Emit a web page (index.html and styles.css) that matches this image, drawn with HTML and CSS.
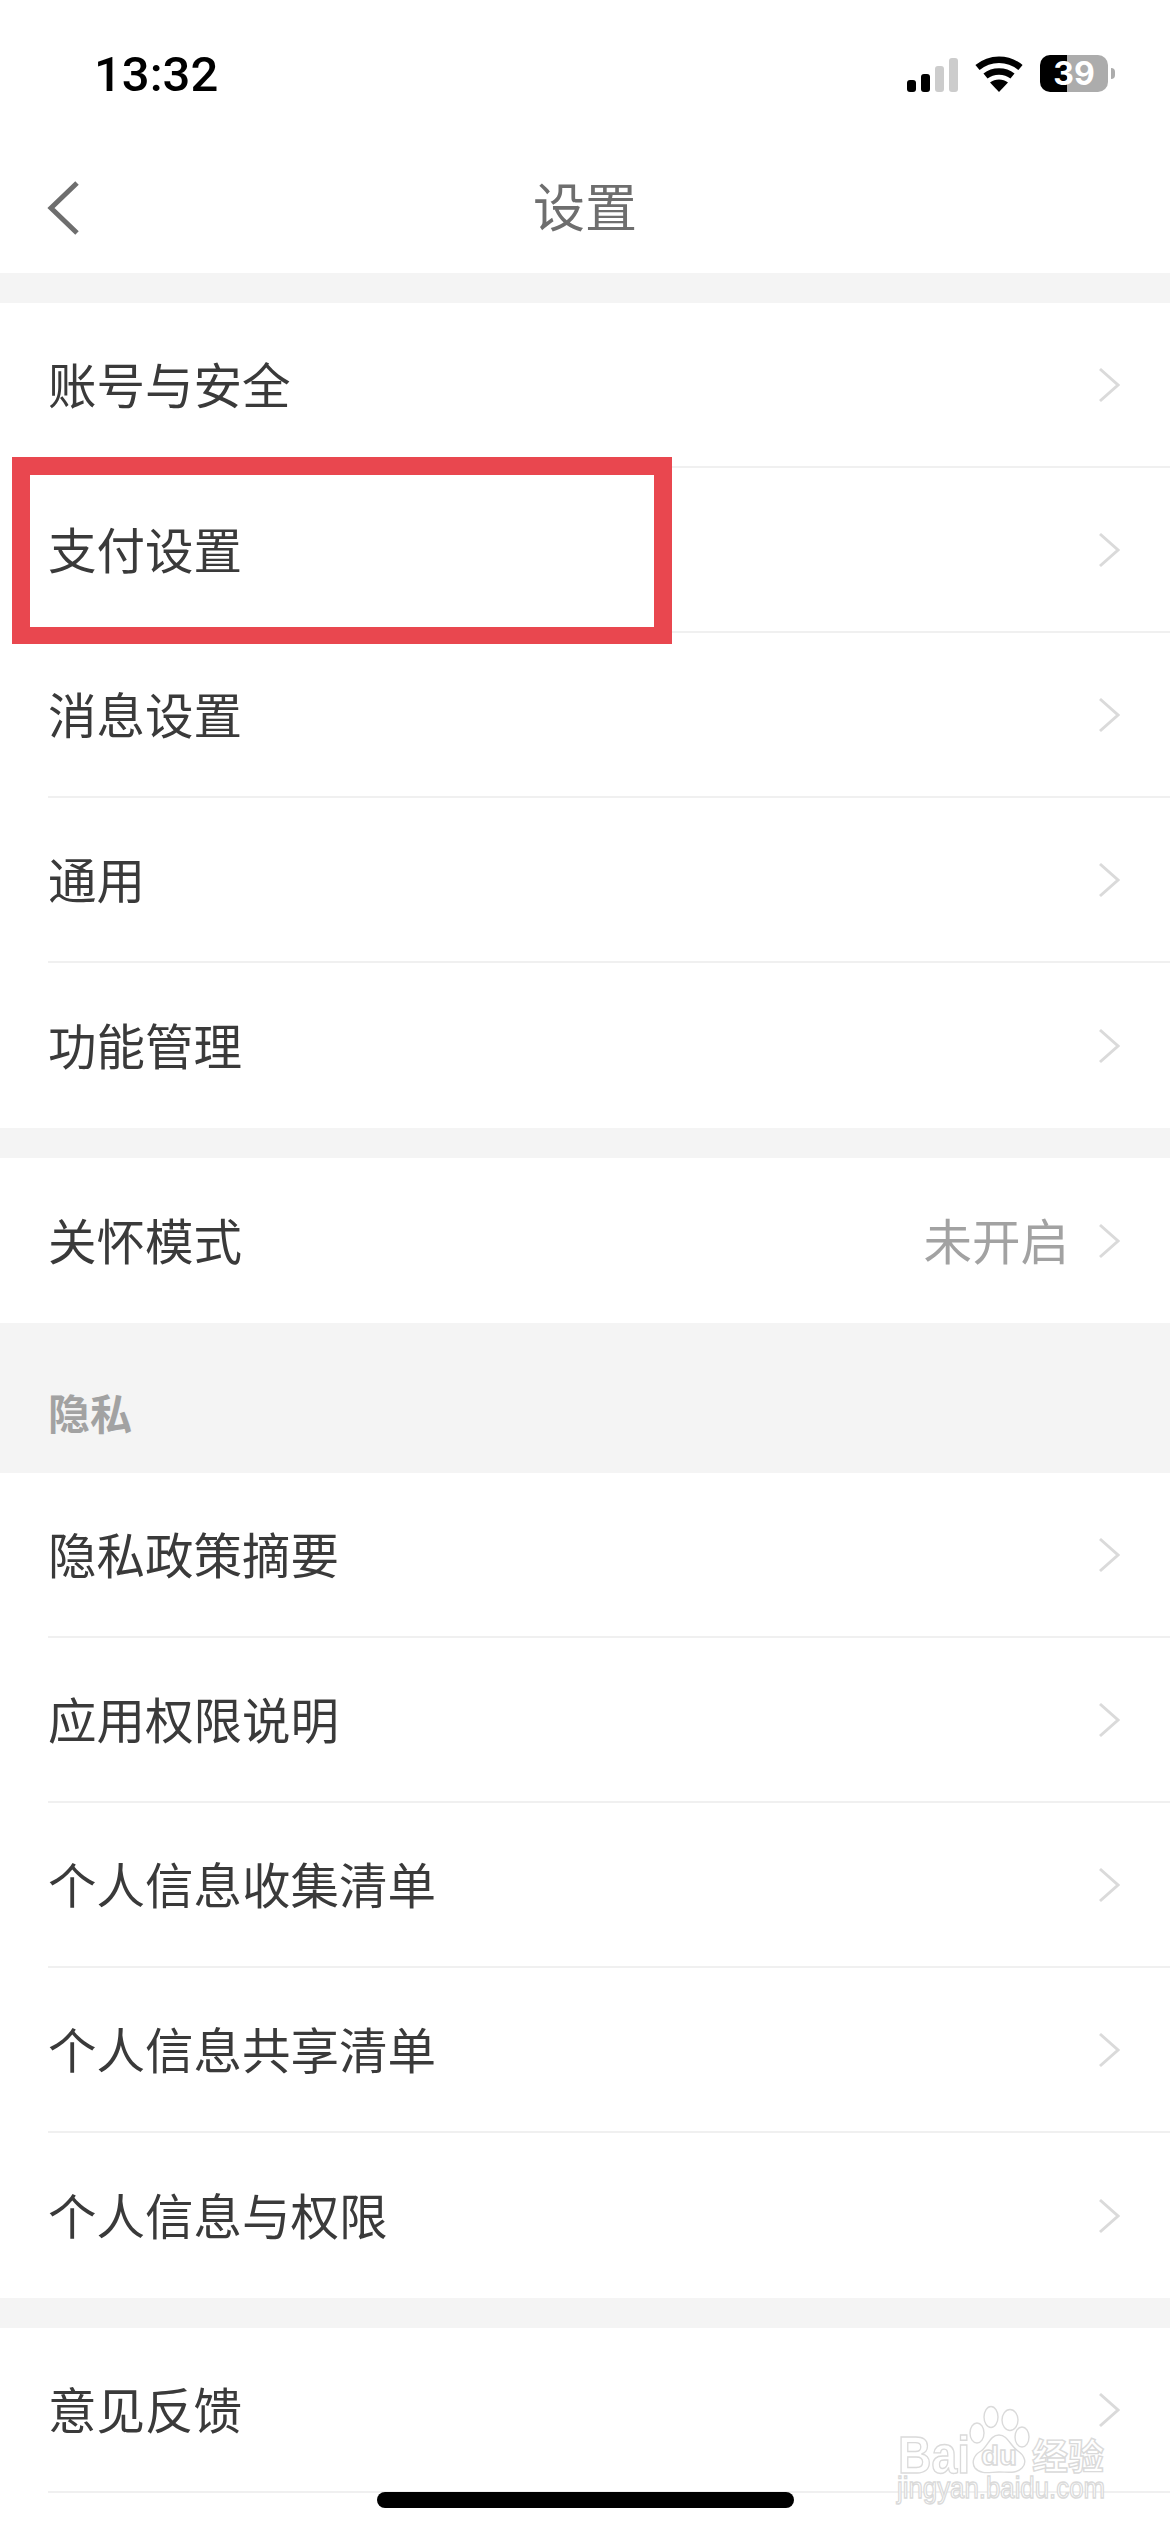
FILE: index.html
```html
<!DOCTYPE html>
<html lang="zh-CN">
<head>
<meta charset="utf-8">
<title>设置</title>
<link rel="stylesheet" href="styles.css">
</head>
<body>
<svg class="defs" width="0" height="0" aria-hidden="true"><symbol id="chev" viewBox="0 0 22 36"><path d="M2 2 L20 18 L2 34" fill="none" stroke="#dadada" stroke-width="3"/></symbol></svg>
<div class="page">
  <header class="top">
    <div class="status">
      <span class="time">13:32</span>
      <div class="status-icons">
        <svg class="signal" width="51" height="34" viewBox="0 0 51 34">
          <rect x="0" y="22" width="9" height="12" rx="3" fill="#000"/>
          <rect x="14" y="16" width="9" height="18" rx="3" fill="#000"/>
          <rect x="28" y="8" width="9" height="26" rx="3" fill="#ccc"/>
          <rect x="42" y="0" width="9" height="34" rx="3" fill="#ccc"/>
        </svg>
        <svg class="wifi" width="48" height="36" viewBox="0 0 48 36">
          <path d="M2.5 11.5 C15 1 33 1 45.5 11.5" fill="none" stroke="#000" stroke-width="6.5"/>
          <path d="M10.5 20 C18 14 30 14 37.5 20" fill="none" stroke="#000" stroke-width="6.5"/>
          <path d="M15 26.5 C20 22.5 28 22.5 33 26.5 L24 36 Z" fill="#000"/>
        </svg>
        <div class="battery">39</div>
      </div>
    </div>
    <nav class="nav">
      <svg class="back" width="33" height="54" viewBox="0 0 33 54"><path d="M30 2 L4 27 L30 52" fill="none" stroke="#6e6e6e" stroke-width="5"/></svg>
      <h1 class="title">设置</h1>
    </nav>
  </header>

  <section class="group">
    <div class="row"><span class="label">账号与安全</span><svg class="chev"><use href="#chev"/></svg></div>
    <div class="row"><span class="label">支付设置</span><svg class="chev"><use href="#chev"/></svg></div>
    <div class="row"><span class="label">消息设置</span><svg class="chev"><use href="#chev"/></svg></div>
    <div class="row"><span class="label">通用</span><svg class="chev"><use href="#chev"/></svg></div>
    <div class="row last"><span class="label">功能管理</span><svg class="chev"><use href="#chev"/></svg></div>
  </section>

  <section class="group">
    <div class="row last"><span class="label">关怀模式</span><span class="value">未开启</span><svg class="chev"><use href="#chev"/></svg></div>
  </section>

  <div class="section-title">隐私</div>

  <section class="group flush">
    <div class="row"><span class="label">隐私政策摘要</span><svg class="chev"><use href="#chev"/></svg></div>
    <div class="row"><span class="label">应用权限说明</span><svg class="chev"><use href="#chev"/></svg></div>
    <div class="row"><span class="label">个人信息收集清单</span><svg class="chev"><use href="#chev"/></svg></div>
    <div class="row"><span class="label">个人信息共享清单</span><svg class="chev"><use href="#chev"/></svg></div>
    <div class="row last"><span class="label">个人信息与权限</span><svg class="chev"><use href="#chev"/></svg></div>
  </section>

  <section class="group fill">
    <div class="row"><span class="label">意见反馈</span><svg class="chev"><use href="#chev"/></svg></div>
  </section>

  <div class="highlight"></div>
  <div class="home-bar"></div>
  <svg class="watermark" width="225" height="110" viewBox="0 0 225 110">
    <g fill="#fff" stroke="#dadada" stroke-width="1.4">
      <ellipse cx="87" cy="33" rx="7" ry="10"/>
      <ellipse cx="101" cy="17" rx="7" ry="10.5"/>
      <ellipse cx="120" cy="20" rx="8" ry="10.5"/>
      <ellipse cx="132" cy="37" rx="7" ry="10"/>
      <path d="M109 35 C118 35 120 46 128 51 C135 56 137 63 132 68 C126 74 118 72 109 72 C100 72 91 75 85 68 C81 62 84 55 91 51 C98 46 100 35 109 35 Z"/>
      <text class="wm-latin" x="8" y="73" font-size="51" textLength="72" lengthAdjust="spacingAndGlyphs">Bai</text>
      <text class="wm-latin" x="91" y="65" font-size="27" textLength="36" lengthAdjust="spacingAndGlyphs">du</text>
      <text class="wm-cjk" x="142" y="70" font-size="36">经验</text>
      <text class="wm-thin" x="7" y="98" font-size="30" textLength="208" lengthAdjust="spacingAndGlyphs">jingyan.baidu.com</text>
    </g>
  </svg>
</div>
</body>
</html>
```

FILE: styles.css
```css
* { box-sizing: border-box; }
html, body { margin: 0; padding: 0; }
body {
  font-family: "Noto Sans CJK SC", "Noto Sans", sans-serif;
  background: #f4f4f4;
}
.defs { position: absolute; }
.page {
  position: relative;
  width: 1170px;
  height: 2532px;
  overflow: hidden;
  background: #f4f4f4;
  display: flex;
  flex-direction: column;
}
.top { background: #fff; height: 273px; flex: none; }
.status {
  height: 141px;
  padding: 53px 55px 0 94px;
  display: flex;
  justify-content: space-between;
  align-items: flex-start;
}
.time {
  font-family: Roboto, sans-serif;
  font-weight: 500;
  font-size: 49px;
  line-height: 44px;
  color: #000;
}
.status-icons { display: flex; align-items: flex-end; margin-top: 2px; }
.wifi { margin-left: 17px; }
.battery {
  position: relative;
  width: 68px;
  height: 37px;
  margin-left: 17px;
  margin-right: 7px;
  border-radius: 10px;
  background: linear-gradient(to right, #000 27px, #acacac 27px);
  color: #fff;
  font-family: Inter, sans-serif;
  font-weight: 700;
  font-size: 32px;
  line-height: 37px;
  text-align: center;
}
.battery::after {
  content: "";
  position: absolute;
  left: 71px;
  top: 13px;
  width: 4px;
  height: 11px;
  border-radius: 0 6px 6px 0;
  background: #acacac;
}
.nav {
  position: relative;
  height: 132px;
  display: flex;
  align-items: center;
  justify-content: center;
}
.back { position: absolute; left: 47px; top: 40px; }
.title {
  margin: 0 0 4px;
  font-weight: 400;
  font-size: 52px;
  line-height: 60px;
  color: #6e6e6e;
}
.group { background: #fff; margin-top: 30px; flex: none; }
.group.flush { margin-top: 0; }
.group.fill { flex: 1; }
.row {
  height: 165px;
  margin-left: 48px;
  padding-right: 50px;
  display: flex;
  align-items: center;
  border-bottom: 2px solid #f0f0f0;
}
.row.last { border-bottom: 0; }
.label {
  flex: 1;
  margin-bottom: 4px;
  font-size: 48.5px;
  line-height: 60px;
  font-weight: 400;
  color: #3a3a3a;
}
.value {
  margin-bottom: 4px;
  font-size: 48.5px;
  line-height: 60px;
  color: #a2a2a2;
  margin-right: 29px;
}
.chev { width: 22px; height: 36px; flex: none; }
.section-title {
  height: 150px;
  flex: none;
  padding: 61px 0 0 48px;
  font-size: 42px;
  line-height: 56px;
  font-weight: 700;
  color: #a2a2a2;
}
.highlight {
  position: absolute;
  left: 12px;
  top: 457px;
  width: 660px;
  height: 187px;
  border: solid #e9474f;
  border-width: 18px 18px 17px 18px;
}
.home-bar {
  position: absolute;
  left: 377px;
  top: 2492px;
  width: 417px;
  height: 16px;
  border-radius: 8px;
  background: #000;
}
.watermark { position: absolute; left: 890px; top: 2400px; }
.wm-latin { font-family: "Liberation Sans", sans-serif; font-weight: 700; }
.wm-thin { font-family: "Liberation Sans", sans-serif; font-weight: 400; }
.wm-cjk { font-family: "Noto Sans CJK SC", sans-serif; font-weight: 700; }
```
